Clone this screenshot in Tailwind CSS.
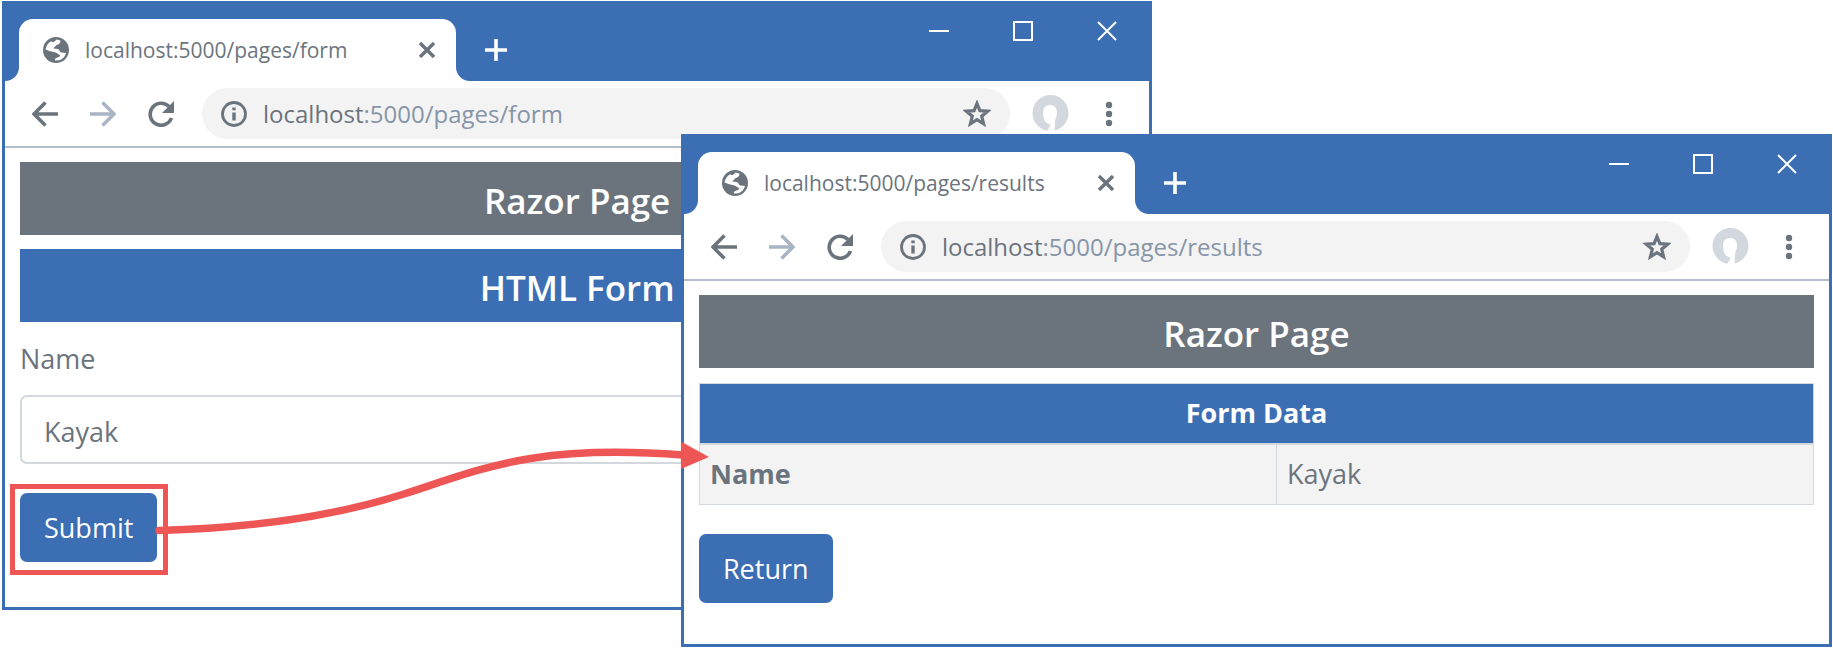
<!DOCTYPE html>
<html lang="en">
<head>
<meta charset="utf-8">
<meta name="viewport" content="width=device-width, initial-scale=1">
<title>Razor Page form</title>
<script src="https://cdn.jsdelivr.net/npm/@tailwindcss/browser@4"></script>
</head>
<body class="relative min-h-[648px] bg-white font-['Open_Sans','Noto_Sans',sans-serif] text-[27px] leading-9 text-[#6b747d]">

<svg class="hidden" aria-hidden="true">
  <symbol id="globe" viewBox="0 0 26 26">
    <circle cx="13" cy="13" r="13" fill="#6b747d"/>
    <path d="M13.500 2.500L17.500 3.500C17.500 6 16 7.500 13.500 8C12.500 9.500 11 10 10.500 11.500L15 12C17 13 16.500 15.500 19 15.500L23 16C22 19.500 20 22 16.500 23.200L12 23.500C11.500 22 12.500 20.800 14.500 20.500C16.500 20 17.500 19 17 18C15 17.500 14.500 16 12.500 15.500C10 14.800 7 14.500 4 13L2.600 12.500C3 9 5.500 5.500 8.500 4.200C9.500 6 11.500 5 13.500 2.500Z" fill="#fff"/>
  </symbol>
  <symbol id="x" viewBox="0 0 16 16"><path d="M1 1 15 15M15 1 1 15" stroke="#6b747d" stroke-width="3.400"/></symbol>
  <symbol id="plus" viewBox="0 0 22 22"><path d="M11 0V22M0 11H22" stroke="#fff" stroke-width="3.600"/></symbol>
  <symbol id="flare" viewBox="0 0 14 14"><path d="M14 0V14H0A14 14 0 0 0 14 0Z" fill="#fff"/></symbol>
  <symbol id="min" viewBox="0 0 20 20"><path d="M0 10H20" stroke="#fff" stroke-width="2"/></symbol>
  <symbol id="max" viewBox="0 0 20 20"><path d="M1 1H19V19H1Z" fill="none" stroke="#fff" stroke-width="2"/></symbol>
  <symbol id="close" viewBox="0 0 20 20"><path d="M1 1 19 19M19 1 1 19" stroke="#fff" stroke-width="2"/></symbol>
  <symbol id="arrow" viewBox="0 0 26 26"><path d="M26 13H2M13.500 1.500 2 13 13.500 24.500" fill="none" stroke="currentColor" stroke-width="3.600"/></symbol>
  <symbol id="reload" viewBox="0 0 26 26"><path d="M23.500 17A11 11 0 1 1 21 5.500" fill="none" stroke="#6b747d" stroke-width="3.600"/><path d="M26 0V12H14Z" fill="#6b747d"/></symbol>
  <symbol id="info" viewBox="0 0 26 26"><circle cx="13" cy="13" r="11.500" fill="none" stroke="#6b747d" stroke-width="2.800"/><path d="M13 11.500V19.500M13 6.500V9.300" stroke="#6b747d" stroke-width="3.400"/></symbol>
  <symbol id="star" viewBox="0 0 28 28"><path d="M14 3.500 16.900 10.700 24.700 11.200 18.700 16.200 20.600 23.800 14 19.700 7.400 23.800 9.300 16.200 3.300 11.200 11.100 10.700Z" fill="none" stroke="#6b747d" stroke-width="3.200"/></symbol>
  <symbol id="avatar" viewBox="0 0 37 37"><circle cx="18.500" cy="18" r="18" fill="#d3d8df"/><path d="M18 10C22.500 10 25 13 25 17.500C25 22 23 24 23 27L22.500 37H14.500L18.500 30.500C18 28 15.500 29.500 13.500 27C11.500 24.500 11 21 11 17.500C11 13 13.500 10 18 10Z" fill="#fff"/></symbol>
  <symbol id="dots" viewBox="0 0 8 26"><circle cx="4" cy="4" r="3.200"/><circle cx="4" cy="13" r="3.200"/><circle cx="4" cy="22" r="3.200"/></symbol>
</svg>

<!-- Form window -->
<section class="absolute left-0.5 top-px flex min-h-[609px] w-[62.75%] flex-col border-[3px] border-[#3b6eb3] bg-white">
  <header class="flex h-[77px] bg-[#3b6eb3]">
    <div class="relative ml-3.5 mt-[15px] flex w-[437px] items-center rounded-t-[14px] bg-white pl-6 pr-[21px]">
      <svg class="absolute -left-3.5 bottom-0 size-3.5"><use href="#flare"/></svg>
      <svg class="absolute -right-3.5 bottom-0 size-3.5 -scale-x-100"><use href="#flare"/></svg>
      <svg class="size-[26px]"><use href="#globe"/></svg>
      <span class="ml-4 flex-1 text-[21px]">localhost:5000/pages/form</span>
      <button type="button" aria-label="Close tab"><svg class="size-4"><use href="#x"/></svg></button>
    </div>
    <button type="button" aria-label="New tab" class="ml-[29px] mt-[15px]"><svg class="size-[22px]"><use href="#plus"/></svg></button>
    <div class="ml-auto flex h-[54px]">
      <button type="button" aria-label="Minimize" class="grid w-[84px] place-items-center"><svg class="size-5"><use href="#min"/></svg></button>
      <button type="button" aria-label="Maximize" class="grid w-[84px] place-items-center"><svg class="size-5"><use href="#max"/></svg></button>
      <button type="button" aria-label="Close" class="grid w-[84px] place-items-center"><svg class="size-5"><use href="#close"/></svg></button>
    </div>
  </header>
  <nav class="flex h-[67px] items-center border-b-2 border-[#b4bfcd] pl-[27px] pr-9">
    <button type="button" aria-label="Back"><svg class="size-[26px]"><use href="#arrow"/></svg></button>
    <button type="button" aria-label="Forward" class="ml-8 text-[#a9b5c5]"><svg class="size-[26px] -scale-x-100"><use href="#arrow"/></svg></button>
    <button type="button" aria-label="Reload" class="ml-8"><svg class="size-[26px]"><use href="#reload"/></svg></button>
    <div class="ml-7 flex h-[51px] flex-1 items-center rounded-full bg-[#f3f3f3] px-[19px]">
      <svg class="size-[26px]"><use href="#info"/></svg>
      <span class="ml-4 flex-1 text-[24px] text-[#8795a8]"><span class="text-[#6b747d]">localhost</span>:5000/pages/form</span>
      <button type="button" aria-label="Bookmark"><svg class="size-7"><use href="#star"/></svg></button>
    </div>
    <button type="button" aria-label="Profile" class="ml-[22px]"><svg class="size-[37px]"><use href="#avatar"/></svg></button>
    <button type="button" aria-label="Menu" class="ml-9"><svg class="h-[26px] w-2 fill-[#6b747d]"><use href="#dots"/></svg></button>
  </nav>
  <main class="px-[15px] pt-3.5">
    <h1 class="flex h-[73px] items-center justify-center bg-[#6b747d] pt-1 text-[35px] font-semibold text-white">Razor Page</h1>
    <h2 class="mt-3.5 flex h-[73px] items-center justify-center bg-[#3b6eb3] pt-1 text-[35px] font-semibold text-white">HTML Form</h2>
    <form onsubmit="return false">
      <label for="name" class="mt-[19px] block">Name</label>
      <input id="name" value="Kayak" class="mt-[18px] block h-[69px] w-full rounded-[7px] border-2 border-[#d3d8df] px-[22px] pt-1 outline-none">
      <div class="-ml-2.5 mt-5 w-fit border-[5px] border-[#ee5655] pb-2 pl-[5px] pr-1.5 pt-1">
        <button type="submit" class="block h-[69px] rounded-[7px] bg-[#3b6eb3] px-6 text-white">Submit</button>
      </div>
    </form>
  </main>
</section>

<!-- Results window -->
<section class="absolute left-[37.15%] right-px top-[134px] flex min-h-[513px] flex-col border-[3px] border-[#3b6eb3] bg-white">
  <header class="flex h-[77px] bg-[#3b6eb3]">
    <div class="relative ml-3.5 mt-[15px] flex w-[437px] items-center rounded-t-[14px] bg-white pl-6 pr-[21px]">
      <svg class="absolute -left-3.5 bottom-0 size-3.5"><use href="#flare"/></svg>
      <svg class="absolute -right-3.5 bottom-0 size-3.5 -scale-x-100"><use href="#flare"/></svg>
      <svg class="size-[26px]"><use href="#globe"/></svg>
      <span class="ml-4 flex-1 text-[21px]">localhost:5000/pages/results</span>
      <button type="button" aria-label="Close tab"><svg class="size-4"><use href="#x"/></svg></button>
    </div>
    <button type="button" aria-label="New tab" class="ml-[29px] mt-[15px]"><svg class="size-[22px]"><use href="#plus"/></svg></button>
    <div class="ml-auto flex h-[54px]">
      <button type="button" aria-label="Minimize" class="grid w-[84px] place-items-center"><svg class="size-5"><use href="#min"/></svg></button>
      <button type="button" aria-label="Maximize" class="grid w-[84px] place-items-center"><svg class="size-5"><use href="#max"/></svg></button>
      <button type="button" aria-label="Close" class="grid w-[84px] place-items-center"><svg class="size-5"><use href="#close"/></svg></button>
    </div>
  </header>
  <nav class="flex h-[67px] items-center border-b-2 border-[#b4bfcd] pl-[27px] pr-9">
    <button type="button" aria-label="Back"><svg class="size-[26px]"><use href="#arrow"/></svg></button>
    <button type="button" aria-label="Forward" class="ml-8 text-[#a9b5c5]"><svg class="size-[26px] -scale-x-100"><use href="#arrow"/></svg></button>
    <button type="button" aria-label="Reload" class="ml-8"><svg class="size-[26px]"><use href="#reload"/></svg></button>
    <div class="ml-7 flex h-[51px] flex-1 items-center rounded-full bg-[#f3f3f3] px-[19px]">
      <svg class="size-[26px]"><use href="#info"/></svg>
      <span class="ml-4 flex-1 text-[24px] text-[#8795a8]"><span class="text-[#6b747d]">localhost</span>:5000/pages/results</span>
      <button type="button" aria-label="Bookmark"><svg class="size-7"><use href="#star"/></svg></button>
    </div>
    <button type="button" aria-label="Profile" class="ml-[22px]"><svg class="size-[37px]"><use href="#avatar"/></svg></button>
    <button type="button" aria-label="Menu" class="ml-9"><svg class="h-[26px] w-2 fill-[#6b747d]"><use href="#dots"/></svg></button>
  </nav>
  <main class="px-[15px] pt-3.5">
    <h1 class="flex h-[73px] items-center justify-center bg-[#6b747d] pt-1 text-[35px] font-semibold text-white">Razor Page</h1>
    <table class="mt-[15px] w-full border-collapse border border-[#d3d8df]">
      <thead>
        <tr class="h-[60px] bg-[#3b6eb3] text-white"><th colspan="2" class="font-bold">Form Data</th></tr>
      </thead>
      <tbody>
        <tr class="h-[61px] border-t-2 border-[#d3d8df] bg-[#f3f3f3]">
          <th scope="row" class="w-[51.8%] border-r border-[#d3d8df] px-2.5 text-left font-bold">Name</th>
          <td class="px-2.5">Kayak</td>
        </tr>
      </tbody>
    </table>
    <button type="button" class="mt-[29px] block h-[69px] rounded-[7px] bg-[#3b6eb3] px-6 text-white">Return</button>
  </main>
</section>

<!-- Arrow from the Submit button to the results window -->
<svg class="pointer-events-none absolute left-[155px] top-[440px] h-[100px] w-[calc(37.15%-127px)]" viewBox="0 0 554 100" preserveAspectRatio="none" aria-hidden="true">
  <path d="M4 90.500C100 88 180 76 249 54C330 28 380 4 528 15" fill="none" stroke="#ee5655" stroke-width="7.500" stroke-linecap="round"/>
  <path d="M526 1.500 554 17 526 29Z" fill="#ee5655"/>
</svg>
</body>
</html>
